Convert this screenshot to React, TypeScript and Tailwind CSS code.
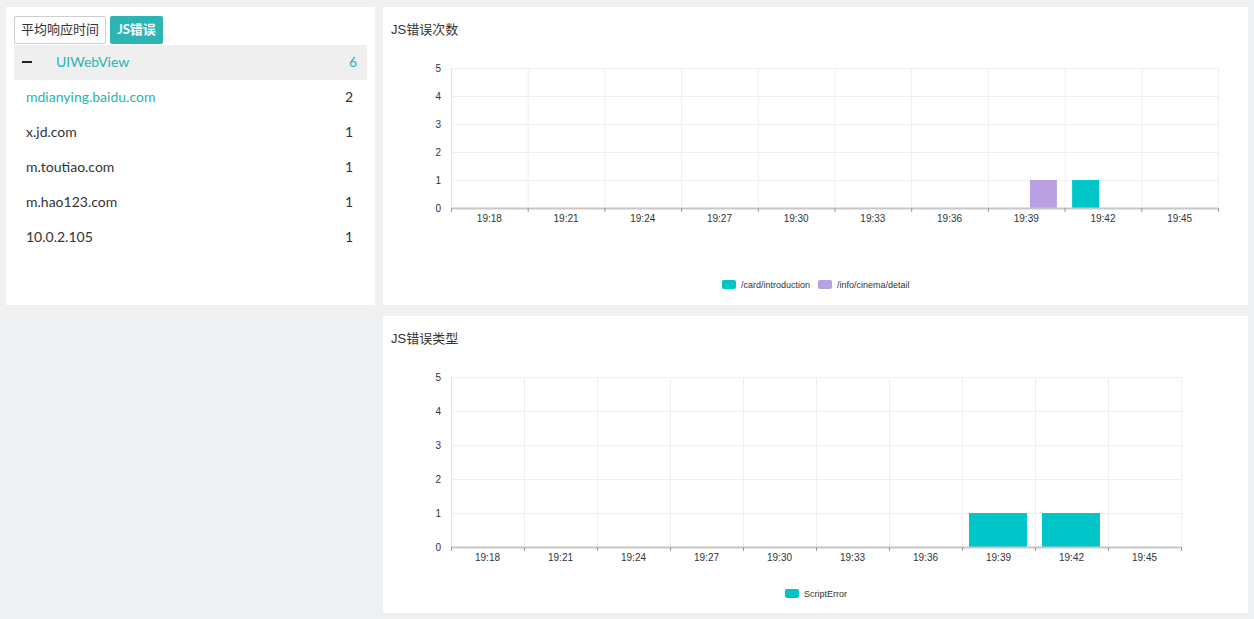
import React from "react";

const TEAL = "#00c5c9";
const PURPLE = "#b8a0e1";
const times = ["19:18", "19:21", "19:24", "19:27", "19:30", "19:33", "19:36", "19:39", "19:42", "19:45"];

const hosts = [
  { name: "mdianying.baidu.com", count: 2, active: true },
  { name: "x.jd.com", count: 1 },
  { name: "m.toutiao.com", count: 1 },
  { name: "m.hao123.com", count: 1 },
  { name: "10.0.2.105", count: 1 },
];

interface Series {
  name: string;
  color: string;
  values: number[];
  legendX: number;
}

interface BarChartProps {
  width: number;
  height: number;
  right: number;
  step: number;
  bars: { x: number; w: number }[];
  series: Series[];
}

const BarChart: React.FC<BarChartProps> = ({ width, height, right, step, bars, series }) => {
  const left = 68;
  const top = 28;
  const bottom = top + step * 5;
  const colW = (right - left) / times.length;
  return (
    <svg width={width} height={height} className="block" style={{ fontFamily: '"Liberation Sans", Arial, sans-serif' }}>
      {[0, 1, 2, 3, 4, 5].map((i) => (
        <g key={i}>
          <line x1={left} x2={right} y1={bottom - i * step + 0.5} y2={bottom - i * step + 0.5} stroke="#efefef" />
          <text x={58} y={bottom - i * step + 3.5} fontSize={10} fill="#333" textAnchor="end">
            {i}
          </text>
        </g>
      ))}
      {times.map((t, i) => (
        <g key={t}>
          <line x1={left + (i + 1) * colW + 0.5} x2={left + (i + 1) * colW + 0.5} y1={top} y2={bottom} stroke="#efefef" />
          <text x={left + i * colW + colW / 2} y={bottom + 13.5} fontSize={10} fill="#333" textAnchor="middle">
            {t}
          </text>
        </g>
      ))}
      <line x1={left + 0.5} x2={left + 0.5} y1={top} y2={bottom} stroke="#e2e2e2" />
      {series.map((s, si) =>
        s.values.map((v, i) =>
          v > 0 ? (
            <rect key={si + "-" + i} x={left + i * colW + bars[si].x} y={bottom - v * step} width={bars[si].w} height={v * step} fill={s.color} />
          ) : null
        )
      )}
      <line x1={left} x2={right} y1={bottom + 0.5} y2={bottom + 0.5} stroke="#c8c8c8" strokeWidth={2} />
      {Array.from({ length: times.length + 1 }).map((_, i) => (
        <line key={i} x1={left + i * colW + 0.5} x2={left + i * colW + 0.5} y1={bottom} y2={bottom + 4} stroke="#999" />
      ))}
      {series.map((s) => (
        <g key={s.name}>
          <rect x={s.legendX} y={240} width={14} height={9} rx={2} fill={s.color} />
          <text x={s.legendX + 19} y={247.5} fontSize={9} fill="#333">
            {s.name}
          </text>
        </g>
      ))}
    </svg>
  );
};

export default function App() {
  return (
    <div
      className="flex h-[619px] gap-[8px] bg-[#eef0f2] pl-[6px] pr-[6px] pt-[7px]"
      style={{ fontFamily: 'Lato, "Noto Sans CJK SC", sans-serif' }}
    >
      <div className="h-[298px] w-[369px] bg-white px-[8px] pt-[9px]">
        <div className="flex gap-[4px]">
          <button className="h-[28px] w-[92px] rounded-[2px] border border-[#cfcfcf] bg-white text-[13px] text-[#333]">
            平均响应时间
          </button>
          <button className="h-[28px] w-[53px] rounded-[2px] bg-[#2bb6b4] text-[13px] font-bold text-white">
            JS错误
          </button>
        </div>
        <div className="mt-[1px] flex h-[35px] items-center bg-[#efefef] pb-[2px] pl-[8px] pr-[10px] text-[14px] text-[#2bb3b1]">
          <span className="h-[2px] w-[10px] bg-[#222]"></span>
          <span className="ml-[24px] flex-1">UIWebView</span>
          <span>6</span>
        </div>
        {hosts.map((h) => (
          <div key={h.name} className="flex h-[35px] items-center pb-[2px] pl-[12px] pr-[14px] text-[14px] text-[#333]">
            <span className={"flex-1 " + (h.active ? "text-[#2bb3b1]" : "")}>{h.name}</span>
            <span>{h.count}</span>
          </div>
        ))}
      </div>
      <div className="flex flex-1 flex-col gap-[11px]">
        <div className="h-[298px] bg-white">
          <div className="h-[33px] pl-[8px] pt-[13px] text-[13px] leading-[20px] text-[#333]" style={{ fontFamily: '"Liberation Sans", "Noto Sans CJK SC", sans-serif' }}>
            JS错误次数
          </div>
          <BarChart
            width={865}
            height={265}
            right={835}
            step={28}
            bars={[
              { x: 7.5, w: 27 },
              { x: 42, w: 27 },
            ]}
            series={[
              { name: "/card/introduction", color: TEAL, values: [0, 0, 0, 0, 0, 0, 0, 0, 1, 0], legendX: 339 },
              { name: "/info/cinema/detail", color: PURPLE, values: [0, 0, 0, 0, 0, 0, 0, 1, 0, 0], legendX: 435 },
            ]}
          />
        </div>
        <div className="h-[297px] bg-white">
          <div className="h-[33px] pl-[8px] pt-[13px] text-[13px] leading-[20px] text-[#333]" style={{ fontFamily: '"Liberation Sans", "Noto Sans CJK SC", sans-serif' }}>
            JS错误类型
          </div>
          <BarChart
            width={865}
            height={264}
            right={798}
            step={34}
            bars={[{ x: 7, w: 58 }]}
            series={[{ name: "ScriptError", color: TEAL, values: [0, 0, 0, 0, 0, 0, 0, 1, 1, 0], legendX: 402 }]}
          />
        </div>
      </div>
    </div>
  );
}
